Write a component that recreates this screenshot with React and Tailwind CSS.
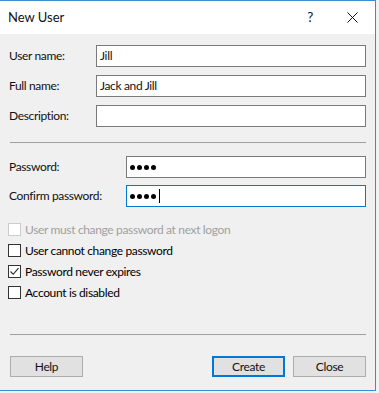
import React from 'react';

/**
 * NEW USER DIALOG
 * Windows 10 style "New User" dialog from Local Users and Groups.
 */
const FONT = { fontFamily: '"Segoe UI", Lato, "Noto Sans", sans-serif' };

const Field = ({ label, labelWidth, value, focused }) => (
  <div className="flex items-center h-[22px]">
    <span className="shrink-0 pl-[9px]" style={{ width: labelWidth }}>{label}</span>
    <div
      className={`flex-1 h-[22px] bg-white border flex items-center px-[3px] ${
        focused ? 'border-[#0078d7]' : 'border-[#7a7a7a]'
      }`}
    >
      {value}
    </div>
  </div>
);

const Dots = ({ caret }) => (
  <div className="flex items-center gap-[2px]">
    {[0, 1, 2, 3].map((i) => (
      <span key={i} className="w-[5px] h-[5px] rounded-full bg-black" />
    ))}
    {caret && <span className="w-px h-[14px] bg-black ml-[1px]" />}
  </div>
);

const Check = ({ label, checked, disabled }) => (
  <div className="flex items-center h-[21px] gap-[4px] pl-[8px]">
    <span
      className={`w-[13px] h-[13px] border bg-white flex items-center justify-center ${
        disabled ? 'border-[#cccccc]' : 'border-[#333333]'
      }`}
    >
      {checked && (
        <svg width="11" height="11" viewBox="0 0 11 11">
          <path d="M1.5 5.5 L4.2 8.3 L9.5 2.2" fill="none" stroke="#222" strokeWidth="1.1" />
        </svg>
      )}
    </span>
    <span className={disabled ? 'text-[#a0a0a0]' : 'text-black'}>{label}</span>
  </div>
);

const Button = ({ children, primary }) => (
  <div
    className={`w-[73px] h-[21px] bg-[#e1e1e1] flex items-center justify-center ${
      primary ? 'border-2 border-[#0078d7]' : 'border border-[#adadad]'
    }`}
  >
    {children}
  </div>
);

export default function App() {
  return (
    <div
      className="w-[379px] h-[393px] bg-[#f2f2f2] text-[12px] tracking-[-0.35px] text-[#111]"
      style={FONT}
    >
      <div className="w-[376px] h-[391px] flex flex-col border-t border-r border-b border-[#3d8bd2]">
        {/* ── TITLE_BAR ─────────────────────────────────────────────── */}
        <div className="h-[33px] bg-white flex items-center shrink-0">
          <span className="pl-[8px] text-[13px] tracking-normal flex-1">New User</span>
          <span className="w-[20px] text-center text-[13.5px] mr-[27px]">?</span>
          <svg width="11" height="11" viewBox="0 0 11 11" className="mr-[17px]">
            <path d="M0.5 0.5 L10.5 10.5 M10.5 0.5 L0.5 10.5" stroke="#111" strokeWidth="1" />
          </svg>
        </div>

        {/* ── BODY ──────────────────────────────────────────────────── */}
        <div className="flex-1 bg-[#f0f0f0] flex flex-col pr-[9px]">
          <div className="flex flex-col gap-[8px] pt-[11px]">
            <Field label="User name:" labelWidth={96} value="Jill" />
            <Field label="Full name:" labelWidth={96} value="Jack and Jill" />
            <Field label="Description:" labelWidth={96} value="" />
          </div>

          <div className="h-px bg-[#a0a0a0] ml-[10px] mt-[15px]" />

          <div className="flex flex-col gap-[7px] pt-[13px]">
            <Field label="Password:" labelWidth={126} value={<Dots />} />
            <Field label="Confirm password:" labelWidth={126} value={<Dots caret />} focused />
          </div>

          <div className="flex flex-col pt-[12px]">
            <Check label="User must change password at next logon" disabled />
            <Check label="User cannot change password" />
            <Check label="Password never expires" checked />
            <Check label="Account is disabled" />
          </div>

          <div className="h-px bg-[#a0a0a0] ml-[10px] mt-[31px]" />

          <div className="flex items-center pt-[21px] pl-[10px]">
            <Button>Help</Button>
            <div className="flex-1" />
            <Button primary>Create</Button>
            <div className="w-[8px]" />
            <Button>Close</Button>
          </div>
        </div>
      </div>
    </div>
  );
}
